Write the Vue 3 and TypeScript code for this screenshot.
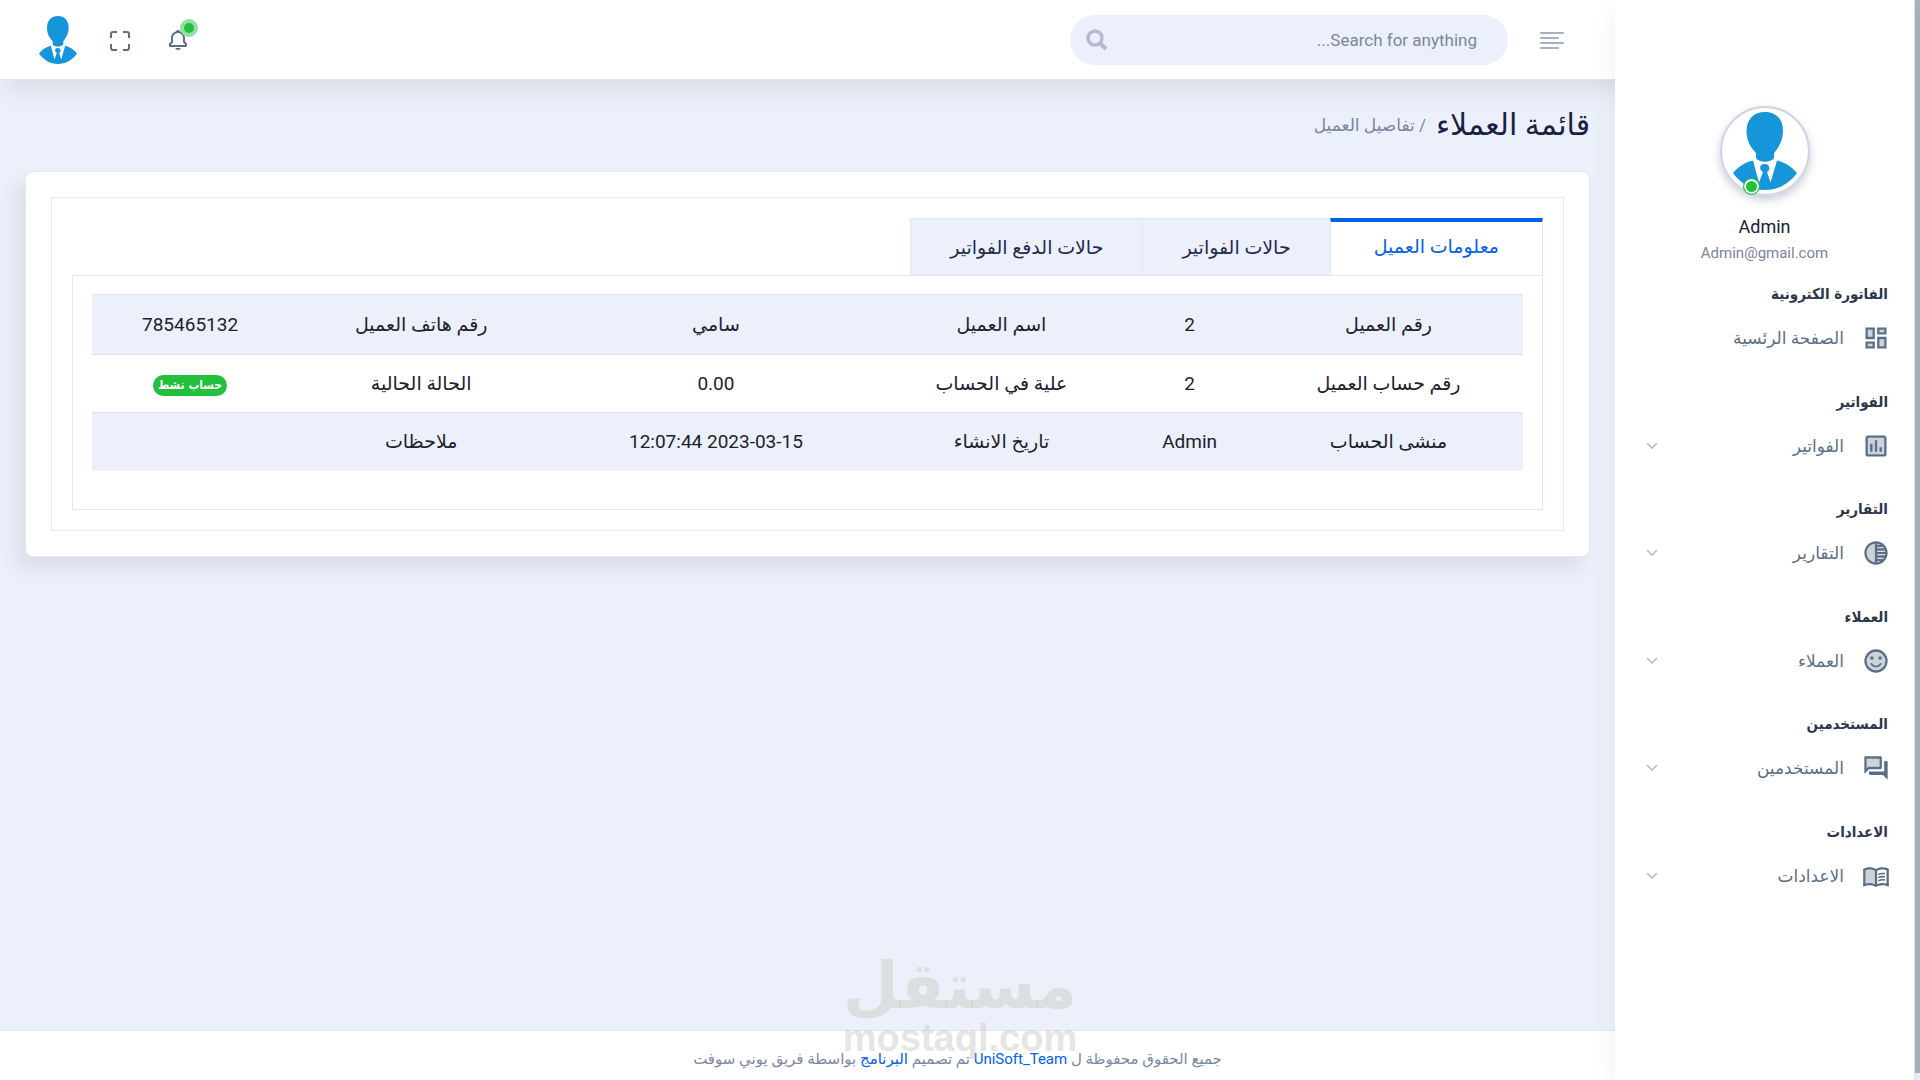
<script setup lang="ts">
import { ref } from 'vue'

interface MenuSection {
  title: string
  label: string
  icon: 'dashboard' | 'poll' | 'tonality' | 'smile' | 'chat' | 'book'
  expandable: boolean
}

interface Cell {
  label: string
  value: string
  badge?: boolean
}

const sections: MenuSection[] = [
  { title: 'الفاتورة الكترونية', label: 'الصفحة الرئسية', icon: 'dashboard', expandable: false },
  { title: 'الفواتير', label: 'الفواتير', icon: 'poll', expandable: true },
  { title: 'التقارير', label: 'التقارير', icon: 'tonality', expandable: true },
  { title: 'العملاء', label: 'العملاء', icon: 'smile', expandable: true },
  { title: 'المستخدمين', label: 'المستخدمين', icon: 'chat', expandable: true },
  { title: 'الاعدادات', label: 'الاعدادات', icon: 'book', expandable: true },
]

const tabs: string[] = ['معلومات العميل', 'حالات الفواتير', 'حالات الدفع الفواتير']
const activeTab = ref(0)
const query = ref('')

const rows: Cell[][] = [
  [
    { label: 'رقم العميل', value: '2' },
    { label: 'اسم العميل', value: 'سامي' },
    { label: 'رقم هاتف العميل', value: '785465132' },
  ],
  [
    { label: 'رقم حساب العميل', value: '2' },
    { label: 'علية في الحساب', value: '0.00' },
    { label: 'الحالة الحالية', value: 'حساب نشط', badge: true },
  ],
  [
    { label: 'منشى الحساب', value: 'Admin' },
    { label: 'تاريخ الانشاء', value: '2023-03-15 12:07:44' },
    { label: 'ملاحظات', value: '' },
  ],
]
</script>

<template>
  <div class="app" dir="rtl" lang="ar">
    <svg class="symbols" aria-hidden="true">
      <symbol id="person" viewBox="0 0 64 78" preserveAspectRatio="none">
        <path fill="#1795db" d="M0 61C6 54 13 50 20 48.500L26 70.500L30 60C26 58 26 52 31.500 52C37 52 38 58 34 60L37.500 70.500L44 48.500C51 50 58 54 64 61C56 72 45 78 32 78C19 78 8 72 0 61Z" />
        <path fill="#1795db" d="M32 0C43 0 50 7 50 19C50 29 45 36 41 41L41 46C38 51 26 51 23 46L23 41C18 36 13.500 29 13.500 19C13.500 7 21 0 32 0Z" />
      </symbol>
    </svg>

    <div class="scroll-rail"><div class="scroll-thumb"></div></div>

    <aside class="sidebar">
      <div class="profile">
        <div class="avatar">
          <svg class="avatar-person"><use href="#person" /></svg>
          <span class="presence"></span>
        </div>
        <h4 class="profile-name">Admin</h4>
        <span class="profile-mail">Admin@gmail.com</span>
      </div>
      <nav class="menu">
        <section v-for="section in sections" :key="section.title" class="menu-section">
          <h3 class="menu-title">{{ section.title }}</h3>
          <a class="menu-link" href="#">
            <svg class="menu-icon" viewBox="0 0 24 24" fill="currentColor" aria-hidden="true">
              <template v-if="section.icon === 'dashboard'">
                <path opacity=".3" d="M5 5h4v6H5zm10 8h4v6h-4zM5 17h4v2H5zM15 5h4v2h-4z" />
                <path d="M3 13h8V3H3v10zm2-8h4v6H5V5zm8 16h8V11h-8v10zm2-8h4v6h-4v-6zM13 3v6h8V3h-8zm6 4h-4V5h4v2zM3 21h8v-6H3v6zm2-4h4v2H5v-2z" />
              </template>
              <template v-else-if="section.icon === 'poll'">
                <path opacity=".3" d="M5 5h14v14H5z" />
                <path d="M19 3H5c-1.100 0-2 .9-2 2v14c0 1.100.9 2 2 2h14c1.100 0 2-.9 2-2V5c0-1.100-.9-2-2-2zm0 16H5V5h14v14zM7 10h2v7H7zm4-3h2v10h-2zm4 6h2v4h-2z" />
              </template>
              <template v-else-if="section.icon === 'tonality'">
                <path opacity=".3" d="M4 12c0 4.080 3.060 7.440 7 7.930V4.070C7.050 4.560 4 7.920 4 12z" />
                <path d="M12 2C6.480 2 2 6.480 2 12s4.480 10 10 10 10-4.480 10-10S17.520 2 12 2zm-1 17.930c-3.940-.49-7-3.850-7-7.930s3.050-7.440 7-7.930v15.860zm2-15.860c1.030.13 2 .45 2.870.93H13v-.93zM13 7h5.240c.25.31.48.65.68 1H13V7zm0 3h6.740c.08.33.15.66.19 1H13v-1zm0 9.930V19h2.870c-.87.48-1.840.8-2.870.93zM18.240 17H13v-1h5.920c-.2.35-.43.69-.68 1zm1.500-3H13v-1h6.930c-.04.34-.11.67-.19 1z" />
              </template>
              <template v-else-if="section.icon === 'smile'">
                <circle opacity=".3" cx="12" cy="12" r="8" />
                <circle cx="12" cy="12" r="9" fill="none" stroke="currentColor" stroke-width="2" />
                <circle cx="8.500" cy="9.500" r="1.500" />
                <circle cx="15.500" cy="9.500" r="1.500" />
                <path d="M12 16c-1.480 0-2.750-.81-3.450-2H6.880c.8 2.050 2.790 3.500 5.120 3.500s4.320-1.450 5.120-3.500h-1.670c-.69 1.190-1.970 2-3.450 2z" />
              </template>
              <template v-else-if="section.icon === 'chat'">
                <path opacity=".3" d="M15 4H4v8.170L5.170 11H15z" />
                <path d="M17 12V3c0-.55-.45-1-1-1H3c-.55 0-1 .45-1 1v14l4-4h10c.55 0 1-.45 1-1zM4 12.170V4h11v7H5.170L4 12.170zM21 6h-2v9H6v2c0 .55.45 1 1 1h11l4 4V7c0-.55-.45-1-1-1z" />
              </template>
              <template v-else>
                <path opacity=".3" d="M3 7v11.500c1.100-.35 2.300-.5 3.500-.5 1.340 0 3.130.41 4.500.99V7.490C9.630 6.910 7.840 6.500 6.500 6.500 5.300 6.500 4.100 6.650 3 7z" />
                <path d="M21 5c-1.110-.35-2.330-.5-3.500-.5-1.950 0-4.050.4-5.500 1.500-1.450-1.100-3.550-1.500-5.500-1.500S2.450 4.900 1 6v14.650c0 .25.25.5.5.5.1 0 .15-.05.25-.05C3.100 20.450 5.050 20 6.500 20c1.950 0 4.050.4 5.500 1.500 1.350-.85 3.800-1.500 5.500-1.500 1.650 0 3.350.3 4.750 1.050.1.050.15.050.25.050.25 0 .5-.25.5-.5V6c-.6-.45-1.250-.75-2-1zM3 18.500V7c1.100-.35 2.300-.5 3.500-.5 1.340 0 3.130.41 4.500.99v11.500C9.630 18.410 7.840 18 6.500 18c-1.200 0-2.400.15-3.500.5zm18 0c-1.100-.35-2.300-.5-3.500-.5-1.340 0-3.130.41-4.500.99V7.490c1.370-.59 3.160-.99 4.500-.99 1.200 0 2.400.15 3.500.5v11.500z" />
                <path d="M14 10.600q2.800-1.100 5.700-.6M14 13.300q2.800-1.100 5.700-.6M14 16q2.800-1.100 5.700-.6" fill="none" stroke="currentColor" stroke-width="1.400" />
              </template>
            </svg>
            <span class="menu-label">{{ section.label }}</span>
            <svg v-if="section.expandable" class="chevron" viewBox="0 0 12 8" aria-hidden="true">
              <path d="M1 1l5 5 5-5" fill="none" stroke="currentColor" stroke-width="1.600" />
            </svg>
          </a>
        </section>
      </nav>
    </aside>

    <div class="page">
      <header class="topbar">
        <button class="icon-button toggle" type="button" aria-label="القائمة">
          <svg width="26" height="20" viewBox="0 0 26 20" aria-hidden="true">
            <path d="M2 3h22M2 8h17M2 13h22M2 18h17" stroke="#a8afc0" stroke-width="2" stroke-linecap="round" />
          </svg>
        </button>
        <form class="search" @submit.prevent>
          <input v-model="query" type="search" placeholder="Search for anything..." aria-label="Search" />
          <button class="icon-button" type="submit" aria-label="Search">
            <svg width="22" height="22" viewBox="0 0 22 22" aria-hidden="true">
              <circle cx="9" cy="9" r="7" fill="none" stroke="#b4bad2" stroke-width="3.400" />
              <path d="M14 14l6 6" stroke="#b4bad2" stroke-width="4" />
            </svg>
          </button>
        </form>
        <div class="actions">
          <button class="icon-button bell" type="button" aria-label="الاشعارات">
            <svg width="24" height="24" viewBox="0 0 24 24" fill="#5b6e88" aria-hidden="true">
              <path d="M19 13.586V10c0-3.217-2.185-5.927-5.145-6.742C13.562 2.520 12.846 2 12 2s-1.562.52-1.855 1.258C7.185 4.074 5 6.783 5 10v3.586l-1.707 1.707A1 1 0 0 0 3 16v2a1 1 0 0 0 1 1h16a1 1 0 0 0 1-1v-2a1 1 0 0 0-.293-.707L19 13.586zM19 17H5v-.586l1.707-1.707A1 1 0 0 0 7 14v-4c0-2.757 2.243-5 5-5s5 2.243 5 5v4c0 .266.105.52.293.707L19 16.414V17zM12 22a2.980 2.980 0 0 0 2.818-2H9.182A2.980 2.980 0 0 0 12 22z" />
            </svg>
            <span class="pulse"></span>
          </button>
          <button class="icon-button" type="button" aria-label="ملء الشاشة">
            <svg width="22" height="24" viewBox="0 0 22 24" aria-hidden="true">
              <path d="M8 4H4Q2 4 2 6v4M14 4h4q2 0 2 2v4M8 22H4q-2 0-2-2v-4M14 22h4q2 0 2-2v-4" fill="none" stroke="#5b6e88" stroke-width="2" />
            </svg>
          </button>
          <button class="icon-button" type="button" aria-label="Admin">
            <svg width="38" height="48"><use href="#person" /></svg>
          </button>
        </div>
      </header>

      <main class="content">
        <div class="breadcrumb">
          <h1>قائمة العملاء</h1>
          <span>/ تفاصيل العميل</span>
        </div>

        <div class="card">
          <div class="panel">
            <div class="tabs" role="tablist">
              <button
                v-for="(tab, i) in tabs"
                :key="tab"
                type="button"
                role="tab"
                class="tab"
                :class="{ active: i === activeTab }"
                :aria-selected="i === activeTab"
                @click="activeTab = i"
              >{{ tab }}</button>
            </div>
            <div class="tab-body">
              <table>
                <colgroup>
                  <col class="c1" /><col class="c2" /><col class="c3" /><col class="c4" /><col class="c5" /><col class="c6" />
                </colgroup>
                <tbody>
                  <tr v-for="(row, r) in rows" :key="r">
                    <template v-for="cell in row" :key="cell.label">
                      <th scope="row">{{ cell.label }}</th>
                      <td><span :class="{ badge: cell.badge }">{{ cell.value }}</span></td>
                    </template>
                  </tr>
                </tbody>
              </table>
            </div>
          </div>
        </div>
      </main>

      <footer class="footer">
        <p>جميع الحقوق محفوظة ل <a href="#">UniSoft_Team</a> تم تصميم <a href="#">البرنامج</a> بواسطة فريق يوني سوفت</p>
      </footer>
    </div>

    <div class="watermark" aria-hidden="true">
      <span class="watermark-ar">مستقل</span>
      <span class="watermark-en">mostaql.com</span>
    </div>
  </div>
</template>

<style>
body {
  background: #ecf0fa;
}
</style>

<style scoped>
* {
  box-sizing: border-box;
}
.app {
  display: flex;
  min-height: 100vh;
  position: relative;
  font-family: Roboto, "DejaVu Sans", sans-serif;
  font-size: 16px;
  color: #1d212f;
}
.symbols {
  position: absolute;
  width: 0;
  height: 0;
}
h1, h3, h4, p {
  margin: 0;
  font-weight: 400;
}
a {
  color: #0162e8;
  text-decoration: none;
}
.icon-button {
  display: flex;
  padding: 0;
  border: 0;
  background: none;
  position: relative;
}

.scroll-rail {
  flex: none;
  width: 5px;
  background: #ecf0fa;
  padding-bottom: 7px;
  display: flex;
}
.scroll-thumb {
  flex: 1;
  background: #a9b3be;
}

.sidebar {
  flex: none;
  width: 300px;
  background: #fff;
  padding-top: 106px;
  box-shadow: 0 8px 24px rgba(40, 40, 90, 0.06);
  border-right: 1px solid #dfe1e6;
  z-index: 2;
}
.profile {
  display: flex;
  flex-direction: column;
  align-items: center;
  height: 176px;
}
.avatar {
  position: relative;
  width: 90px;
  height: 90px;
  border: 2px solid #cdd4e6;
  border-radius: 50%;
  display: flex;
  justify-content: center;
  padding-top: 4px;
  box-shadow: 0 4px 8px rgba(100, 110, 130, 0.35);
}
.avatar-person {
  width: 64px;
  height: 78px;
}
.presence {
  position: absolute;
  left: 21px;
  bottom: -1px;
  width: 17px;
  height: 17px;
  border-radius: 50%;
  background: #22c03c;
  border: 1px solid #22c03c;
  box-shadow: inset 0 0 0 2px #fff;
}
.profile-name {
  margin-top: 19px;
  font-size: 18px;
  line-height: 24px;
}
.profile-mail {
  font-size: 15px;
  line-height: 28px;
  color: #7b83a1;
}
.menu {
  display: grid;
  grid-auto-rows: 1fr;
  min-height: 645px;
}
.menu-section {
  padding: 0 26px 0 35px;
}
.menu-title {
  font-family: "DejaVu Sans Condensed", "DejaVu Sans", sans-serif;
  font-size: 15px;
  font-weight: 700;
  line-height: 24px;
  color: #2c364c;
}
.menu-link {
  display: flex;
  align-items: center;
  height: 28px;
  margin-top: 18px;
  color: #5b6e88;
}
.menu-icon {
  width: 28px;
  height: 28px;
  margin-right: -2px;
}
.menu-label {
  flex: 1;
  margin-right: 18px;
  font-size: 17px;
}
.chevron {
  width: 12px;
  height: 8px;
  margin-left: -4px;
  color: #b4bdce;
}

.page {
  flex: 1;
  min-width: 0;
  display: flex;
  flex-direction: column;
}
.topbar {
  display: flex;
  align-items: center;
  height: 80px;
  padding: 0 50px 0 39px;
  background: #fff;
  border-bottom: 1px solid #dee4f0;
  box-shadow: 8px 12px 18px 0 #dadee8;
}
.search {
  display: flex;
  align-items: center;
  width: 438px;
  height: 50px;
  margin-right: 31px;
  padding: 0 31px 0 16px;
  border-radius: 25px;
  background: #ecf0fa;
}
.search input {
  flex: 1;
  min-width: 0;
  border: 0;
  outline: 0;
  padding: 0;
  background: none;
  font: inherit;
  font-size: 17px;
}
.search input::placeholder {
  color: #7987a1;
  opacity: 1;
}
.actions {
  display: flex;
  align-items: center;
  margin-right: auto;
}
.actions .icon-button + .icon-button {
  margin-right: 35px;
}
.actions .icon-button:last-child {
  margin-right: 32px;
}
.pulse {
  position: absolute;
  top: -9px;
  left: 14px;
  width: 18px;
  height: 18px;
  border-radius: 50%;
  background: #22c03c;
  border: 4px solid #96dfa3;
}

.content {
  flex: 1;
  padding: 25px;
}
.breadcrumb {
  display: flex;
  align-items: center;
  height: 40px;
  gap: 10px;
}
.breadcrumb h1 {
  font-size: 30px;
  line-height: 40px;
  color: #1a1f45;
}
.breadcrumb span {
  font-size: 17px;
  line-height: 40px;
  color: #7b83a1;
}
.card {
  margin-top: 26px;
  padding: 25px;
  border: 1px solid #e2e8f5;
  border-radius: 8px;
  background: #fff;
  box-shadow: -8px 12px 18px 0 #dadee8;
}
.panel {
  padding: 20px;
  border: 1px solid #e6e9f4;
}
.tabs {
  display: flex;
}
.tab {
  height: 57px;
  padding: 0 39px;
  border: 1px solid #e1e6f3;
  border-bottom: 0;
  border-right-width: 0;
  background: #ecf0fa;
  font: inherit;
  font-size: 19px;
  color: #242a52;
}
.tab.active {
  padding: 0 43px 4px;
  border-top: 4px solid #0162e8;
  border-right-width: 1px;
  background: #fff;
  color: #0162e8;
}
.tab-body {
  padding: 18px 19px 38px;
  border: 1px solid #e1e6f3;
}
table {
  width: 100%;
  table-layout: fixed;
  border-collapse: collapse;
}
.c1 { width: 18.8%; }
.c2 { width: 9%; }
.c3 { width: 17.3%; }
.c4 { width: 22.6%; }
.c5 { width: 18.6%; }
.c6 { width: 13.7%; }
th, td {
  height: 58px;
  padding: 0;
  border-top: 1px solid #dde3f0;
  font-size: 19px;
  font-weight: 400;
  line-height: 24px;
  text-align: center;
}
tr:first-child > * {
  height: 60px;
}
tr:nth-child(odd) {
  background: #ecf0fa;
}
.badge {
  display: inline-block;
  padding: 0 5px;
  border-radius: 11px;
  background: #22c03c;
  color: #fff;
  font-family: "DejaVu Sans Condensed", "DejaVu Sans", sans-serif;
  font-size: 12px;
  font-weight: 700;
  line-height: 21px;
}

.footer {
  height: 50px;
  padding-left: 300px;
  border-top: 1px solid #dee5f6;
  background: #fff;
  color: #7987a1;
  font-size: 15px;
  line-height: 56px;
  text-align: center;
}

.watermark {
  position: absolute;
  left: 50%;
  bottom: 22px;
  transform: translateX(-50%);
  z-index: 3;
  display: flex;
  flex-direction: column;
  align-items: center;
  color: rgba(204, 204, 196, 0.5);
  font-weight: 700;
  pointer-events: none;
}
.watermark-ar {
  font-family: "DejaVu Sans", sans-serif;
  font-size: 64px;
  line-height: 64px;
}
.watermark-en {
  font-family: "Liberation Sans", sans-serif;
  font-size: 38px;
  line-height: 40px;
}
</style>
